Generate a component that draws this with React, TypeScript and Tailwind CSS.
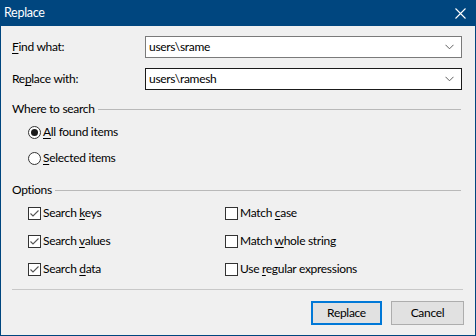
import React from "react";

function Chevron() {
  return (
    <svg width="9" height="6" viewBox="0 0 9 6" className="shrink-0">
      <path d="M0.5 0.8 L4.5 4.8 L8.5 0.8" fill="none" stroke="#606060" strokeWidth="1" />
    </svg>
  );
}

function Combo({ value, dark }: { value: string; dark?: boolean }) {
  return (
    <div
      className={`w-[317px] h-[22px] bg-white border flex items-center justify-between pl-[3px] pr-[7px] ${
        dark ? "border-[#1a1a1a]" : "border-[#7a7a7a]"
      }`}
    >
      <span className="text-[12px] text-black leading-none">{value}</span>
      <Chevron />
    </div>
  );
}

function GroupHeader({ title }: { title: string }) {
  return (
    <div className="flex items-center h-[16px]">
      <span className="text-[12px] text-black pr-[3px]">{title}</span>
      <div className="flex-1 h-px bg-[#b9b9b9]" />
    </div>
  );
}

function Radio({ checked, label }: { checked?: boolean; label: React.ReactNode }) {
  return (
    <div className="flex items-center h-[16px] gap-[2px]">
      <div className="w-[13px] h-[13px] rounded-full border border-[#333] bg-white flex items-center justify-center">
        {checked && <div className="w-[7px] h-[7px] rounded-full bg-[#1a1a1a]" />}
      </div>
      <span className="text-[12px] text-black">{label}</span>
    </div>
  );
}

function Check({ checked, label }: { checked?: boolean; label: React.ReactNode }) {
  return (
    <div className="flex items-center h-[16px] gap-[2px]">
      <div className="w-[13px] h-[13px] border border-[#333] bg-white flex items-center justify-center">
        {checked && (
          <svg width="11" height="11" viewBox="0 0 11 11">
            <path d="M1.5 5.5 L4 8 L9.5 2.5" fill="none" stroke="#555" strokeWidth="1.1" />
          </svg>
        )}
      </div>
      <span className="text-[12px] text-black">{label}</span>
    </div>
  );
}

export default function App() {
  return (
    <div
      className="w-[476px] h-[336px] bg-[#00467f] flex flex-col tracking-[-0.3px]"
      style={{ fontFamily: 'Lato, "Noto Sans", sans-serif' }}
    >
      <div className="h-[26px] flex items-center justify-between pl-[4px] pr-[10px] shrink-0">
        <span className="text-[12.5px] text-white">Replace</span>
        <svg width="11" height="11" viewBox="0 0 11 11">
          <path d="M0.5 0.5 L10.5 10.5 M10.5 0.5 L0.5 10.5" stroke="white" strokeWidth="1.1" />
        </svg>
      </div>
      <div className="flex-1 mx-px mb-px bg-[#f0f0f0] flex flex-col px-[11px] pt-[10px]">
        <div className="flex items-center justify-between pr-[2px]">
          <span className="text-[12px] text-black">
            <u className="underline-offset-2">F</u>ind what:
          </span>
          <Combo value="users\srame" />
        </div>
        <div className="flex items-center justify-between pr-[2px] mt-[10px]">
          <span className="text-[12px] text-black">
            Re<u className="underline-offset-2">p</u>lace with:
          </span>
          <Combo value="users\ramesh" dark />
        </div>

        <div className="mt-[11px] pr-[3px]">
          <GroupHeader title="Where to search" />
        </div>
        <div className="flex flex-col gap-[10px] pl-[16px] mt-[7px]">
          <Radio checked label={<><u className="underline-offset-2">A</u>ll found items</>} />
          <Radio label={<><u className="underline-offset-2">S</u>elected items</>} />
        </div>

        <div className="mt-[16px] pr-[3px]">
          <GroupHeader title="Options" />
        </div>
        <div className="grid grid-cols-[197px_1fr] gap-y-[12px] pl-[16px] mt-[7px]">
          <Check checked label={<>Search <u className="underline-offset-2">k</u>eys</>} />
          <Check label={<>Match <u className="underline-offset-2">c</u>ase</>} />
          <Check checked label={<>Search <u className="underline-offset-2">v</u>alues</>} />
          <Check label={<>Match <u className="underline-offset-2">w</u>hole string</>} />
          <Check checked label={<>Search <u className="underline-offset-2">d</u>ata</>} />
          <Check label={<>Use <u className="underline-offset-2">r</u>egular expressions</>} />
        </div>

        <div className="h-px bg-[#c8c8c8] mt-[12px] mr-[1px]" />

        <div className="flex justify-end gap-[9px] mt-[11px]">
          <button className="w-[71px] h-[24px] bg-[#e1e1e1] border-2 border-[#0078d7] text-[12px] text-black">
            Replace
          </button>
          <button className="w-[73px] h-[24px] bg-[#e1e1e1] border border-[#adadad] text-[12px] text-black">
            Cancel
          </button>
        </div>
      </div>
    </div>
  );
}
